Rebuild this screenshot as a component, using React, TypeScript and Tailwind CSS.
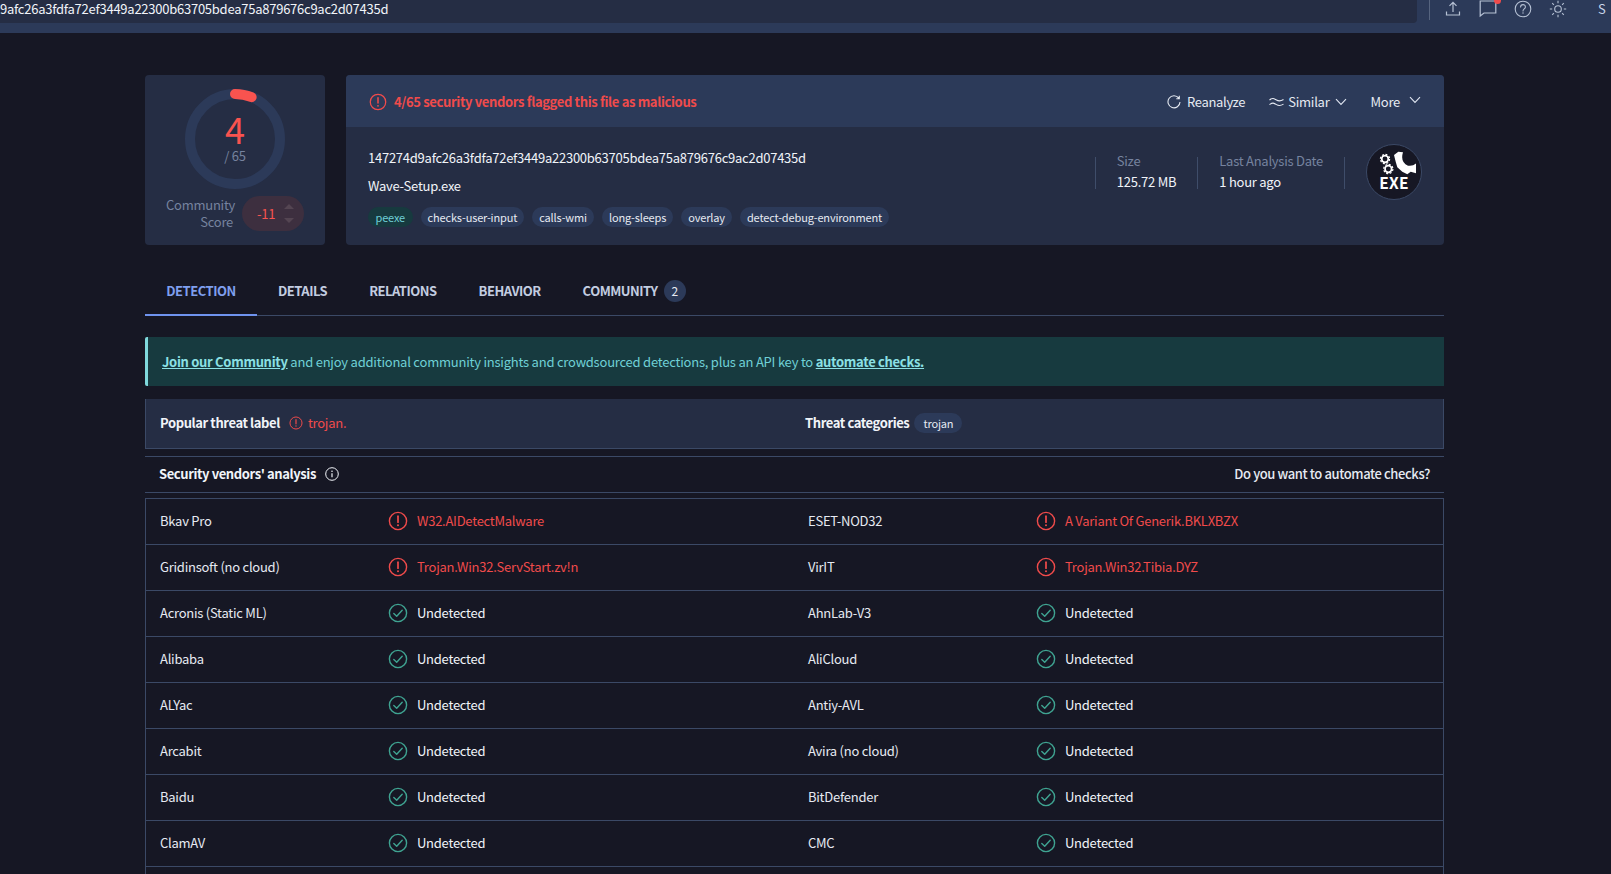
const FONT = "font-['Noto_Sans_CJK_SC','Noto_Sans',sans-serif]";

const tags = ["checks-user-input", "calls-wmi", "long-sleeps", "overlay", "detect-debug-environment"];

const tabs = ["DETAILS", "RELATIONS", "BEHAVIOR"];

type Vendor = { name: string; label?: string };

const rows: [Vendor, Vendor][] = [
  [{ name: "Bkav Pro", label: "W32.AIDetectMalware" }, { name: "ESET-NOD32", label: "A Variant Of Generik.BKLXBZX" }],
  [{ name: "Gridinsoft (no cloud)", label: "Trojan.Win32.ServStart.zv!n" }, { name: "VirIT", label: "Trojan.Win32.Tibia.DYZ" }],
  [{ name: "Acronis (Static ML)" }, { name: "AhnLab-V3" }],
  [{ name: "Alibaba" }, { name: "AliCloud" }],
  [{ name: "ALYac" }, { name: "Antiy-AVL" }],
  [{ name: "Arcabit" }, { name: "Avira (no cloud)" }],
  [{ name: "Baidu" }, { name: "BitDefender" }],
  [{ name: "ClamAV" }, { name: "CMC" }],
];

function AlertIcon({ size = 20 }: { size?: number }) {
  return (
    <svg width={size} height={size} viewBox="0 0 20 20" fill="none" className="shrink-0 text-[#f04b4b]" stroke="currentColor" strokeWidth="1.4">
      <circle cx="10" cy="10" r="8.6" />
      <path d="M10 5.2v6" strokeWidth="1.7" strokeLinecap="round" />
      <circle cx="10" cy="14.2" r="1" fill="currentColor" stroke="none" />
    </svg>
  );
}

function CheckIcon() {
  return (
    <svg width="20" height="20" viewBox="0 0 20 20" fill="none" className="shrink-0 text-[#3fa391]" stroke="currentColor" strokeWidth="1.4">
      <circle cx="10" cy="10" r="8.6" />
      <path d="M5.8 10.4l2.9 2.8 5.5-6" strokeLinecap="round" strokeLinejoin="round" />
    </svg>
  );
}

function Chevron() {
  return (
    <svg width="12" height="8" viewBox="0 0 12 8" fill="none" stroke="currentColor" strokeWidth="1.1" className="text-[#dfe5f0]">
      <path d="M1 1.2l5 5.3 5-5.3" />
    </svg>
  );
}

function Cell({ vendor, className }: { vendor: Vendor; className: string }) {
  return (
    <div className={`flex items-center pl-[14px] ${className}`}>
      <div className="w-[228px] shrink-0 -mt-[1px] text-[#e6eaf2]">{vendor.name}</div>
      <div className="-mt-[1px]">{vendor.label ? <AlertIcon /> : <CheckIcon />}</div>
      <div className={`ml-[9px] -mt-[1px] ${vendor.label ? "text-[#f04b4b]" : "text-[#f1f4f9]"}`}>{vendor.label ?? "Undetected"}</div>
    </div>
  );
}

function TopBar() {
  return (
    <div className="h-[33px] bg-[#2c3a59] flex items-start overflow-hidden">
      <div className="w-[1417px] h-[23px] bg-[#252d44] rounded-br-[4px] text-[#f1f4f9] leading-[17px]">
        <div className="whitespace-nowrap">9afc26a3fdfa72ef3449a22300b63705bdea75a879676c9ac2d07435d</div>
      </div>
      <div className="w-px h-[20px] bg-[#56647f] ml-[12px]" />
      <div className="flex items-center gap-[17px] ml-[14px] h-[18px] text-[#b6c1d4]">
        <svg width="18" height="18" viewBox="0 0 18 18" fill="none" stroke="currentColor" strokeWidth="1.2">
          <path d="M9 12V2.5M5.5 5.8 9 2.3l3.5 3.5M2.5 11.5v3.5h13v-3.5" />
        </svg>
        <div className="relative">
          <svg width="18" height="18" viewBox="0 0 18 18" fill="none" stroke="currentColor" strokeWidth="1.2">
            <path d="M1.2 1h15.6v12H5l-3.8 3z" />
          </svg>
          <span className="absolute -top-[3px] -right-[4px] w-[7px] h-[7px] rounded-full bg-[#f04b4b]" />
        </div>
        <svg width="18" height="18" viewBox="0 0 18 18" fill="none" stroke="currentColor" strokeWidth="1.1">
          <circle cx="9" cy="9" r="7.8" />
          <path d="M6.6 7c0-3.2 4.8-3.2 4.8 0 0 1.9-2.4 1.9-2.4 3.9" strokeLinecap="round" />
          <circle cx="9" cy="13" r=".7" fill="currentColor" stroke="none" />
        </svg>
        <svg width="18" height="18" viewBox="0 0 18 18" fill="none" stroke="currentColor" strokeWidth="1.1">
          <circle cx="9" cy="9" r="3.3" />
          <path d="M9 .8v2.4M9 14.8v2.4M.8 9h2.4M14.8 9h2.4M3.2 3.2l1.7 1.7M13.1 13.1l1.7 1.7M3.2 14.8l1.7-1.7M13.1 4.9l1.7-1.7" />
        </svg>
      </div>
      <span className="ml-[31px] leading-[17px] text-[#c9d6ea] whitespace-nowrap">S</span>
    </div>
  );
}

function ScoreCard() {
  return (
    <div className="w-[180px] h-[170px] shrink-0 rounded-[4px] bg-[#252d44] flex flex-col items-center pt-[14px]">
      <div className="relative w-[100px] h-[100px]">
        <svg width="100" height="100" viewBox="0 0 100 100" fill="none">
          <circle cx="50" cy="50" r="45" stroke="#2c3a59" strokeWidth="10" />
          <circle cx="50" cy="50" r="45" stroke="#f9534f" strokeWidth="10" strokeLinecap="round" strokeDasharray="17 266" transform="rotate(-90 50 50)" />
        </svg>
        <div className="absolute inset-0 flex flex-col items-center justify-center">
          <span className="text-[36px] leading-[32px] mb-[2px] tracking-normal text-[#f9534f]">4</span>
          <span className="leading-[20px] text-[#76839f]">/ 65</span>
        </div>
      </div>
      <div className="flex items-center gap-[9px] mt-[7px] w-full pl-[21px]">
        <div className="-mt-[2px] w-[67px] text-right leading-[17px] text-[#76839f]">Community Score</div>
        <div className="w-[62px] h-[35px] rounded-full bg-[#3d2f3f] flex items-center gap-[9px] pl-[15px] text-[#f9534f]">
          <span>-11</span>
          <div className="flex flex-col gap-[9px]">
            <span className="w-0 h-0 border-x-[5px] border-x-transparent border-b-[5px] border-b-[#544552]" />
            <span className="w-0 h-0 border-x-[5px] border-x-transparent border-t-[5px] border-t-[#544552]" />
          </div>
        </div>
      </div>
    </div>
  );
}

function ExeBadge() {
  return (
    <div className="w-[56px] h-[56px] rounded-full bg-[#161724] border border-[#3b4966] flex flex-col items-center justify-end pb-[9px] shrink-0">
      <svg width="44" height="32" viewBox="-2 0 44 32" fill="none" className="-mb-[6px]">
        <circle cx="11" cy="11" r="3.3" stroke="#fff" strokeWidth="1.7" />
        <circle cx="11" cy="11" r="4.6" stroke="#fff" strokeWidth="1.2" strokeDasharray="2 1.6" />
        <circle cx="14.3" cy="21" r="3.3" stroke="#fff" strokeWidth="1.7" />
        <circle cx="14.3" cy="21" r="4.6" stroke="#fff" strokeWidth="1.2" strokeDasharray="2 1.6" />
        <path d="M20 7L24.3 3.7L29 4.3Q26 14 34 17.7Q39 18.5 42.3 15.3L42.3 25.3L36.7 23.7L33.3 26.3L28.3 23.7L23.3 19.3L21.7 13.7Z" fill="#fff" />
      </svg>
      <span className="text-[15.5px] leading-[16px] font-bold text-white tracking-[0.3px]">EXE</span>
    </div>
  );
}

function SummaryCard() {
  return (
    <div className="flex-1 h-[170px] rounded-[4px] bg-[#252d44] overflow-hidden">
      <div className="h-[52px] bg-[#2c3a59] flex items-center pl-[23px] pr-[23px] pt-[1px] text-[#e6eaf2]">
        <AlertIcon size={18} />
        <span className="ml-[7px] font-semibold tracking-[-0.35px] text-[#f04b4b]">4/65 security vendors flagged this file as malicious</span>
        <div className="ml-auto flex items-center">
          <svg width="14" height="14" viewBox="0 0 14 14" fill="none" stroke="currentColor" strokeWidth="1.1">
            <path d="M11.8 3.2A6 6 0 1 0 13 7M12.3.8v3h-3" />
          </svg>
          <span className="ml-[6px] tracking-[-0.3px]">Reanalyze</span>
          <svg width="15" height="10" viewBox="0 0 15 10" fill="none" stroke="currentColor" strokeWidth="1.1" className="ml-[24px]">
            <path d="M.5 3c3-2.4 4.5-1.6 7 0s4 1.4 7-.5M.5 7.6c3-2.4 4.5-1.6 7 0s4 1.4 7-.5" />
          </svg>
          <span className="ml-[4px] mr-[6px]">Similar</span>
          <Chevron />
          <span className="ml-[23px] mr-[9px]">More</span>
          <div className="-mt-[3px]">
            <Chevron />
          </div>
        </div>
      </div>
      <div className="flex pl-[22px] pr-[22px] pt-[21px]">
        <div className="flex-1">
          <div className="leading-[20px] text-[#f1f4f9]">147274d9afc26a3fdfa72ef3449a22300b63705bdea75a879676c9ac2d07435d</div>
          <div className="leading-[20px] mt-[8px] text-[#f1f4f9]">Wave-Setup.exe</div>
          <div className="flex gap-[8px] mt-[11px] text-[11px] tracking-[-0.15px] leading-[20px]">
            <span className="px-[7.5px] rounded-full bg-[#173a3f] text-[#6fd0d6]">peexe</span>
            {tags.map((t) => (
              <span key={t} className="px-[7px] rounded-full bg-[#2c3a59] text-[#e6eaf2]">{t}</span>
            ))}
          </div>
        </div>
        <div className="flex items-start -mt-[3px]">
          <div className="w-px h-[32px] bg-[#3f4d6a] mt-[12px]" />
          <div className="px-[21px] pt-[6px] leading-[20px]">
            <div className="text-[#76839f]">Size</div>
            <div className="mt-[1px] text-[#f1f4f9]">125.72 MB</div>
          </div>
          <div className="w-px h-[32px] bg-[#3f4d6a] mt-[12px]" />
          <div className="px-[21px] pt-[6px] leading-[20px]">
            <div className="text-[#76839f]">Last Analysis Date</div>
            <div className="mt-[1px] text-[#f1f4f9]">1 hour ago</div>
          </div>
          <div className="w-px h-[32px] bg-[#3f4d6a] mt-[12px]" />
          <div className="ml-[21px] -mt-[1px]">
            <ExeBadge />
          </div>
        </div>
      </div>
    </div>
  );
}

export default function App() {
  return (
    <div className={`${FONT} h-[874px] overflow-hidden bg-[#161724] text-[13px] tracking-[-0.25px]`}>
      <TopBar />
      <div className="w-[1299px] ml-[145px] mt-[42px]">
        <div className="flex gap-[21px]">
          <ScoreCard />
          <SummaryCard />
        </div>

        {/* Tabs */}
        <div className="flex items-center h-[71px] border-b border-[#3b4966] font-semibold tracking-[-0.5px] text-[#c3cde0]">
          <div className="h-full w-[112px] flex items-center justify-center pt-[23px] text-[#7f9fee] border-b-2 border-[#6f93ee] -mb-px">DETECTION</div>
          {tabs.map((t) => (
            <div key={t} className="px-[21px] pt-[21px]">{t}</div>
          ))}
          <div className="flex items-center pl-[21px] pt-[21px]">
            COMMUNITY
            <span className="ml-[6px] w-[22px] h-[22px] rounded-full bg-[#2c3a59] flex items-center justify-center text-[12px] font-normal text-[#e6eaf2]">2</span>
          </div>
        </div>

        {/* Banner */}
        <div className="mt-[21px] h-[49px] bg-[#173a3f] border-l-[3px] border-[#7fd8dc] rounded-l-[2px] flex items-center pl-[14px] tracking-[-0.22px] text-[#6fd0d6]">
          <span>
            <a className="font-bold underline tracking-[-0.3px] text-[#8be0e4]">Join our Community</a> and enjoy additional community insights and crowdsourced detections, plus an API key to <a className="font-bold underline tracking-[-0.3px] text-[#8be0e4]">automate checks.</a>
          </span>
        </div>

        {/* Threat label */}
        <div className="mt-[13px] h-[50px] bg-[#252d44] border border-t-0 border-[#3b4966] flex items-center pl-[14px] pb-[2px]">
          <div className="w-[645px] flex items-center shrink-0">
            <span className="font-semibold tracking-[-0.4px] text-[#f1f4f9]">Popular threat label</span>
            <span className="ml-[9px]"><AlertIcon size={14} /></span>
            <span className="ml-[5px] text-[#f04b4b]">trojan.</span>
          </div>
          <span className="font-semibold tracking-[-0.4px] text-[#f1f4f9]">Threat categories</span>
          <span className="ml-[5px] px-[9px] text-[11px] tracking-[-0.15px] leading-[20px] rounded-full bg-[#2c3a59] text-[#e6eaf2]">trojan</span>
        </div>

        {/* Vendors heading */}
        <div className="mt-[7px] h-[37px] border-y border-[#3b4966] flex items-center justify-between px-[14px] pb-[2px]">
          <div className="flex items-center">
            <span className="font-semibold tracking-[-0.4px] text-[#f1f4f9]">Security vendors' analysis</span>
            <svg width="14" height="14" viewBox="0 0 14 14" fill="none" stroke="#f1f4f9" strokeWidth="1" className="ml-[9px]">
              <circle cx="7" cy="7" r="6.3" />
              <path d="M7 6.2v4" strokeWidth="1.2" />
              <circle cx="7" cy="4.2" r=".8" fill="#f1f4f9" stroke="none" />
            </svg>
          </div>
          <span className="font-medium tracking-[-0.4px] text-[#e6eaf2]">Do you want to automate checks?</span>
        </div>

        {/* Vendors table */}
        <div className="mt-[5px] border-x border-t border-[#3b4966]">
          {rows.map(([a, b]) => (
            <div key={a.name} className="flex h-[46px] border-b border-[#3b4966]">
              <Cell vendor={a} className="w-[648px]" />
              <Cell vendor={b} className="flex-1" />
            </div>
          ))}
          <div className="h-[46px]" />
        </div>
      </div>
    </div>
  );
}
